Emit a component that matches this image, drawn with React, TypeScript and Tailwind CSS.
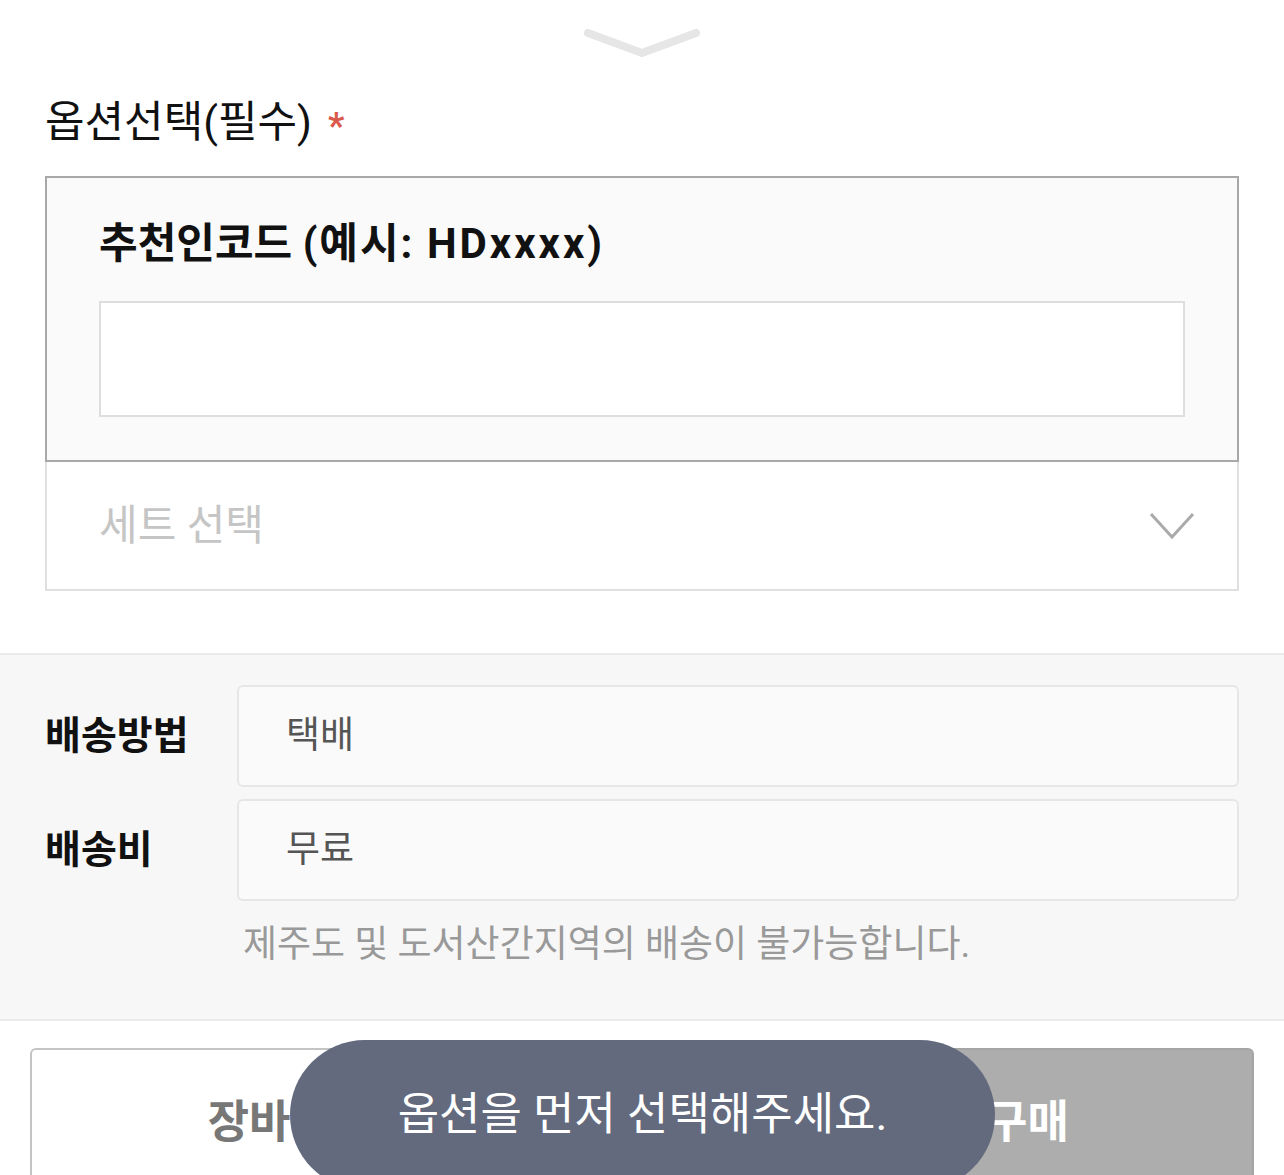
import React from 'react';

const FONT = "font-['Roboto','Noto_Sans_CJK_KR',sans-serif]";

export default function App() {
  return (
    <div className={`${FONT} relative h-[1175px] w-[1284px] overflow-hidden bg-white`}>
      {/* drag handle */}
      <div className="flex justify-center pt-[27px]">
        <svg width="118" height="32" viewBox="0 0 118 32" fill="none">
          <polyline points="5,6 59,26 113,6" stroke="#e6e6e6" strokeWidth="8" strokeLinecap="round" strokeLinejoin="round" />
        </svg>
      </div>

      {/* OPTIONS */}
      <div className="px-[45px]">
        <div className="flex h-[48px] items-center mt-[39px] text-[43px] leading-[48px] text-[#111]">
          <span>옵션선택(필수)</span>
          <span className="ml-[16px] mt-[8px] text-[36px] font-bold text-[#d9594c]">*</span>
        </div>

        <div className="mt-[30px] border-2 border-[#a8a8a8] bg-[#fafafa] px-[52px] pt-[42px] pb-[43px]">
          <div className="text-[42px] font-bold leading-[48px] text-[#111]">
            추천인코드 <span className="tracking-[2px]">(예시: </span><span className="tracking-[3px]">HDxxxx)</span>
          </div>
          <div className="mt-[33px] h-[116px] border-2 border-[#dedede] bg-white" />
        </div>

        <div className="flex h-[129px] items-center justify-between border-x-2 border-b-2 border-[#e0e0e0] bg-white pl-[52px] pr-[42px]">
          <span className="text-[42px] text-[#c5c5c5]">세트 선택</span>
          <svg width="46" height="28" viewBox="0 0 46 28" fill="none">
            <polyline points="2,2 23,25 44,2" stroke="#aaaaaa" strokeWidth="3" />
          </svg>
        </div>
      </div>

      {/* DELIVERY */}
      <div className="mt-[62px] border-y-2 border-[#ebebeb] bg-[#f7f7f7] px-[45px] pt-[30px] pb-[48px]">
        <div className="flex flex-col gap-[12px]">
          <div className="flex items-center">
            <div className="w-[192px] text-[39px] font-bold text-[#111]">배송방법</div>
            <div className="flex h-[102px] flex-1 items-center rounded-md border-2 border-[#e6e6e6] bg-[#fafafa] pl-[47px] text-[37px] text-[#555]">택배</div>
          </div>
          <div className="flex items-center">
            <div className="w-[192px] text-[39px] font-bold text-[#111]">배송비</div>
            <div className="flex h-[102px] flex-1 items-center rounded-md border-2 border-[#e6e6e6] bg-[#fafafa] pl-[47px] text-[37px] text-[#555]">무료</div>
          </div>
        </div>
        <p className="mt-[18px] pl-[198px] text-[37px] leading-[52px] text-[#999]">제주도 및 도서산간지역의 배송이 불가능합니다.</p>
      </div>

      {/* BUTTONS */}
      <div className="flex gap-[12px] px-[30px] pt-[27px]">
        <button className="flex h-[150px] w-[521px] items-center justify-center rounded-md border-2 border-[#c4c4c4] bg-white text-[45px] font-bold text-[#777]">장바구니</button>
        <button className="h-[150px] flex-1 rounded-md border-2 border-[#c4c4c4] bg-white" />
        <button className="flex h-[150px] w-[536px] items-center justify-center rounded-md border-2 border-[#a5a5a5] bg-[#adadad] text-[45px] font-bold text-white">바로구매</button>
      </div>

      {/* toast */}
      <div className="absolute left-[290px] top-[1040px] flex h-[150px] w-[705px] items-center justify-center rounded-full bg-[#636a7e] text-[45px] text-white">
        옵션을 먼저 선택해주세요.
      </div>
    </div>
  );
}
